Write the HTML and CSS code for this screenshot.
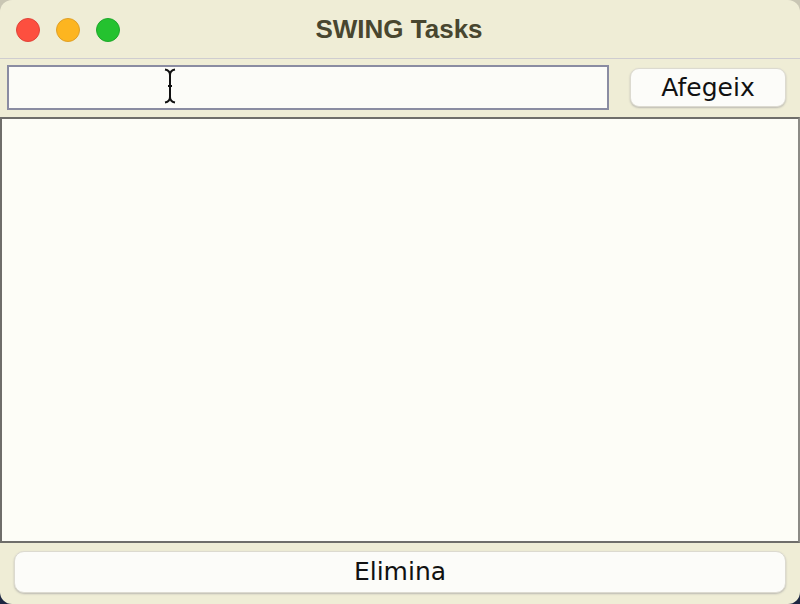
FILE: index.html
```html
<!DOCTYPE html>
<html>
<head>
<meta charset="utf-8">
<link rel="stylesheet" href="styles.css">
</head>
<body>
<div class="window">
  <div class="titlebar">
    <div class="lights">
      <span class="light red"></span>
      <span class="light yellow"></span>
      <span class="light green"></span>
    </div>
    <div class="title">SWING Tasks</div>
    <div></div>
  </div>
  <div class="toolbar">
    <div class="field">
      <svg class="ibeam" width="16" height="36" viewBox="0 0 16 36">
        <path d="M3 1.5 Q8 2.5 8 7 Q8 2.5 13 1.5 M8 7 V29 M3 34.5 Q8 33.5 8 29 Q8 33.5 13 34.5 M6 18 H10" fill="none" stroke="#111" stroke-width="2"/>
      </svg>
    </div>
    <button class="btn add">Afegeix</button>
  </div>
  <div class="list"></div>
  <div class="footer">
    <button class="btn remove">Elimina</button>
  </div>
</div>
</body>
</html>
```
FILE: styles.css
```css
html, body {
  margin: 0;
  padding: 0;
  height: 604px;
  background: #1d2742;
  overflow: hidden;
}
body {
  background: linear-gradient(to bottom, #c9c6b4 0, #c9c6b4 50%, #1d2742 50%, #1d2742 100%);
}
.window {
  height: 604px;
  box-sizing: border-box;
  background: #efedd6;
  border-radius: 12px;
  display: flex;
  flex-direction: column;
  overflow: hidden;
  font-family: "DejaVu Sans", sans-serif;
}
.titlebar {
  height: 58px;
  border-bottom: 1px solid #cfcdd0;
  display: grid;
  grid-template-columns: 1fr auto 1fr;
  align-items: center;
}
.lights {
  display: flex;
  gap: 16px;
  padding-left: 16px;
  padding-top: 2px;
}
.light {
  width: 24px;
  height: 24px;
  border-radius: 50%;
  box-sizing: border-box;
}
.red { background: #fd4f3f; border: 1px solid #e0443a; }
.yellow { background: #fdb520; border: 1px solid #dfa028; }
.green { background: #24c22f; border: 1px solid #1fa82b; }
.title {
  font-family: "Liberation Sans", Arial, sans-serif;
  font-weight: bold;
  font-size: 26px;
  color: #48462f;
  padding-top: 1px;
  margin-right: 2px;
}
.toolbar {
  display: flex;
  align-items: center;
  gap: 21px;
  padding: 6px 14px 6px 7px;
}
.field {
  flex: 1;
  height: 45px;
  box-sizing: border-box;
  border: 2px solid #8a8ca2;
  background: #fcfcf8;
  position: relative;
}
.ibeam {
  position: absolute;
  left: 153px;
  top: 1px;
}
.btn {
  font-family: "DejaVu Sans", sans-serif;
  font-size: 25px;
  color: #111;
  background: #fcfcf9;
  border: 1px solid #dcdad0;
  border-radius: 9px;
  box-shadow: 0 1px 2px rgba(90, 90, 110, 0.35);
  padding: 0;
}
.add {
  width: 156px;
  height: 39px;
}
.list {
  flex: 1;
  margin-top: 1px;
  background: #fdfdf7;
  border: 2px solid #6f6e6a;
  border-right-color: #8c8b86;
}
.footer {
  padding: 8px 14px 11px 14px;
  display: flex;
}
.remove {
  flex: 1;
  height: 42px;
  border-radius: 10px;
  padding-bottom: 2px;
}
```
